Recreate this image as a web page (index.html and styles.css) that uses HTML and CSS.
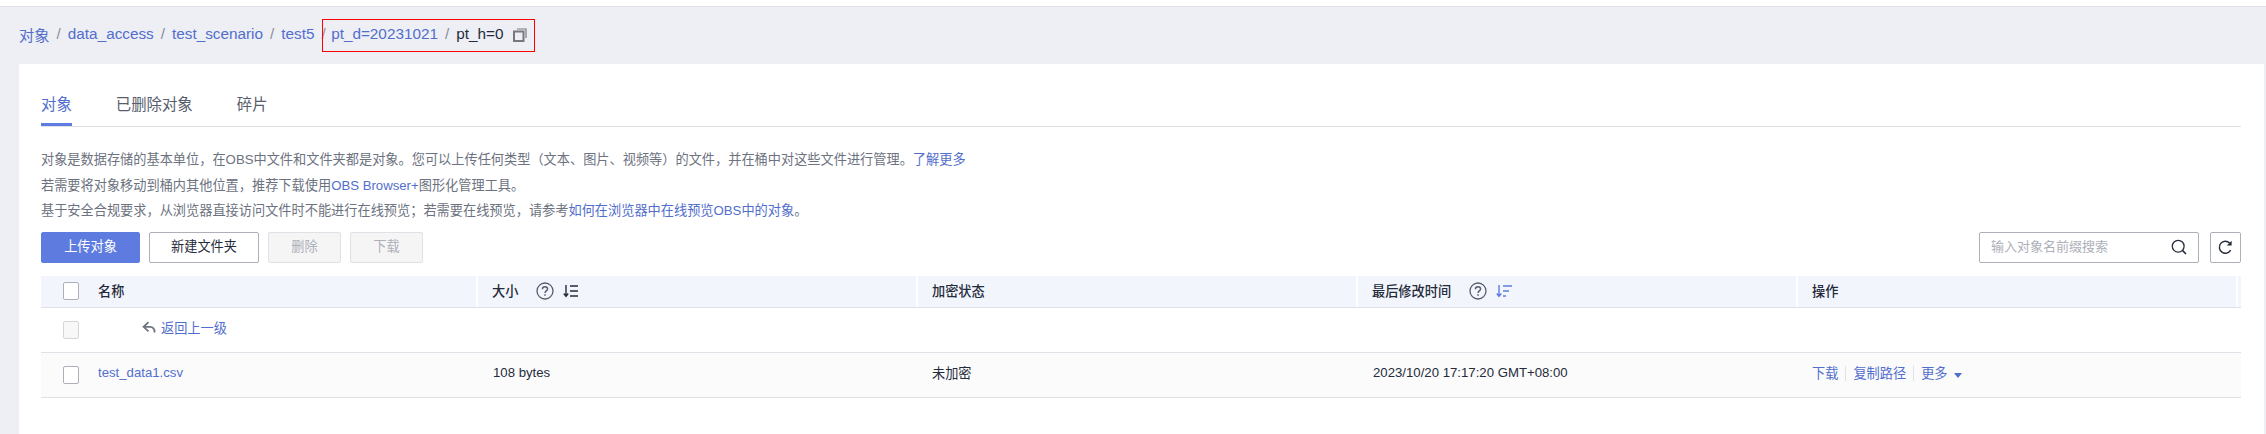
FILE: index.html
```html
<!DOCTYPE html>
<html lang="zh-CN">
<head>
  <meta charset="UTF-8" />
  <title>对象</title>
  <link rel="stylesheet" href="styles.css">
</head>
<body>
  <div class="topline"></div>

  <!-- Breadcrumb -->
  <nav class="crumbs">
    <a>对象</a><span class="sep">/</span>
    <a>data_access</a><span class="sep">/</span>
    <a>test_scenario</a><span class="sep">/</span>
    <a>test5</a><span class="sep">/</span>
    <div class="marked">
      <a>pt_d=20231021</a><span class="sep">/</span>
      <span class="current">pt_h=0</span>
      <svg class="copy" width="14" height="14" viewBox="0 0 14 14" fill="none">
        <rect x="1" y="3.5" width="9.5" height="9.5" stroke="#75787f" stroke-width="2"/>
        <path d="M4 1H13V10" stroke="#75787f" stroke-width="1.2"/>
      </svg>
    </div>
  </nav>

  <div class="card">
    <!-- Tabs -->
    <div class="tabs">
      <div class="tab active">对象</div>
      <div class="tab">已删除对象</div>
      <div class="tab">碎片</div>
    </div>

    <div class="desc">
      <p>对象是数据存储的基本单位，在OBS中文件和文件夹都是对象。您可以上传任何类型（文本、图片、视频等）的文件，并在桶中对这些文件进行管理。<a>了解更多</a></p>
      <p>若需要将对象移动到桶内其他位置，推荐下载使用<a>OBS Browser+</a>图形化管理工具。</p>
      <p>基于安全合规要求，从浏览器直接访问文件时不能进行在线预览；若需要在线预览，请参考<a>如何在浏览器中在线预览OBS中的对象</a>。</p>
    </div>

    <!-- Toolbar -->
    <div class="toolbar">
      <button class="btn primary">上传对象</button>
      <button class="btn outline">新建文件夹</button>
      <button class="btn disabled">删除</button>
      <button class="btn disabled">下载</button>
      <div class="spacer"></div>
      <div class="search">
        <input type="text" placeholder="输入对象名前缀搜索">
        <svg width="16" height="16" viewBox="0 0 16 16" fill="none" stroke="#252b3a" stroke-width="1.3">
          <circle cx="7.2" cy="7.2" r="5.9"/>
          <path d="M11.4 11.4L15 15" stroke-width="1.6"/>
        </svg>
      </div>
      <button class="btn refresh">
        <svg width="15" height="15" viewBox="0 0 15 15" fill="none">
          <path d="M12.6 10.2A6 6 0 1 1 11.6 3" stroke="#252b3a" stroke-width="1.4"/>
          <path d="M13.6 0.8V5.6H8.8Z" fill="#252b3a"/>
        </svg>
      </button>
    </div>

    <!-- Object table -->
    <div class="table">
      <div class="row head">
        <div class="cell name"><span class="check"></span><span class="txt">名称</span></div>
        <div class="cell"><span class="txt">大小</span>
          <svg class="help" width="18" height="18" viewBox="0 0 18 18" fill="none" stroke="#575d6c">
            <circle cx="9" cy="9" r="8" stroke-width="1.3"/>
            <path d="M6.4 7.2C6.4 5.6 7.6 4.7 9 4.7S11.6 5.6 11.6 7C11.6 8.8 9 9 9 11" stroke-width="1.4"/>
            <path d="M9 12.2V13.8" stroke-width="1.5"/>
          </svg>
          <svg class="sort" width="16" height="14" viewBox="0 0 16 14" fill="none" stroke="#252b3a" stroke-width="1.4">
            <path d="M3 1V12M0.8 9.5L3 12.4L5.2 9.5"/>
            <path d="M7 2H15M7 7H15M7 12H15"/>
          </svg>
        </div>
        <div class="cell"><span class="txt">加密状态</span></div>
        <div class="cell"><span class="txt">最后修改时间</span>
          <svg class="help" width="18" height="18" viewBox="0 0 18 18" fill="none" stroke="#575d6c">
            <circle cx="9" cy="9" r="8" stroke-width="1.3"/>
            <path d="M6.4 7.2C6.4 5.6 7.6 4.7 9 4.7S11.6 5.6 11.6 7C11.6 8.8 9 9 9 11" stroke-width="1.4"/>
            <path d="M9 12.2V13.8" stroke-width="1.5"/>
          </svg>
          <svg class="sort" width="16" height="14" viewBox="0 0 16 14" fill="none" stroke="#5e7ce0" stroke-width="1.4">
            <path d="M3 1V12M0.8 9.5L3 12.4L5.2 9.5"/>
            <path d="M7 2H16M7 7H13M7 12H10"/>
          </svg>
        </div>
        <div class="cell"><span class="txt">操作</span></div>
        <div class="cell"></div>
      </div>

      <div class="row">
        <div class="cell name"><span class="check off"></span>
          <svg class="back" width="14" height="13" viewBox="0 0 14 13" fill="none" stroke="#6f7480" stroke-width="1.8">
            <path d="M6.5 1.2L1.6 5.8L6.5 10.4"/>
            <path d="M1.6 5.8H8C11 5.8 12.6 8 12.6 11.5"/>
          </svg>
          <a>返回上一级</a>
        </div>
      </div>

      <div class="row object">
        <div class="cell name"><span class="check"></span><a>test_data1.csv</a></div>
        <div class="cell shift"><span class="txt">108 bytes</span></div>
        <div class="cell"><span class="txt">未加密</span></div>
        <div class="cell shift"><span class="txt">2023/10/20 17:17:20 GMT+08:00</span></div>
        <div class="cell actions">
          <a>下载</a><i></i><a>复制路径</a><i></i><a>更多</a><span class="caret"></span>
        </div>
        <div class="cell"></div>
      </div>
    </div>
  </div>
</body>
</html>
```

FILE: styles.css
```css
html, body {
  height: 100%;
}

body {
  margin: 0;
  height: 434px;
  overflow: hidden;
  background-color: #eeeff5;
  font-family: "Liberation Sans", "Noto Sans CJK SC", sans-serif;
  font-size: 13.2px;
  color: #252b3a;
}

a {
  color: #526ecc;
  text-decoration: none;
}

.topline {
  height: 6px;
  background: #fff;
  border-bottom: 1px solid #dfe1e6;
}

/* Breadcrumb */
.crumbs {
  display: flex;
  align-items: center;
  height: 57px;
  padding-left: 19px;
  font-size: 15.3px;
}

.crumbs a,
.crumbs .sep,
.crumbs .current {
  padding-bottom: 3px;
}

.sep {
  margin: 0 7px;
  color: #8a8e99;
}

.marked {
  display: flex;
  align-items: center;
  height: 33px;
  box-sizing: border-box;
  margin-left: -11px;
  padding: 0 6.5px 0 8.5px;
  border: 1.5px solid #f00;
}

.current {
  color: #252b3a;
}

.copy {
  margin-left: 10px;
  margin-bottom: 2px;
}

/* Card */
.card {
  margin: 0 2px 0 19px;
  height: 370px;
  box-sizing: border-box;
  padding: 0 23px 0 22px;
  background: #fff;
}

.tabs {
  display: flex;
  gap: 44px;
  height: 62px;
  border-bottom: 1px solid #dfe1e6;
}

.tab {
  padding-top: 30px;
  font-size: 15.4px;
  line-height: 22px;
  color: #575d6c;
}

.tab.active {
  color: #526ecc;
  border-bottom: 3px solid #5e7ce0;
  height: 29px;
}

.desc {
  margin-top: 20px;
  color: #6c7280;
  line-height: 25.5px;
}

.desc p {
  margin: 0;
}

/* Toolbar */
.toolbar {
  display: flex;
  gap: 9px;
  height: 31px;
  margin-top: 8px;
  margin-bottom: 13px;
}

.spacer {
  flex: 1;
}

.btn {
  height: 31px;
  padding: 0 0 3px;
  box-sizing: border-box;
  border: 1px solid #adb0b8;
  border-radius: 2px;
  background: #fff;
  color: #252b3a;
  font: inherit;
}

.btn.primary {
  width: 99px;
  background: #5e7ce0;
  border-color: #5e7ce0;
  color: #fff;
}

.btn.outline {
  width: 110px;
}

.btn.disabled {
  width: 73px;
  background: #f5f5f6;
  border-color: #dfe1e6;
  color: #adb0b8;
}

.btn.refresh {
  width: 31px;
  margin-left: 2px;
  padding: 0;
  display: flex;
  align-items: center;
  justify-content: center;
}

.search {
  display: flex;
  align-items: center;
  width: 220px;
  height: 31px;
  box-sizing: border-box;
  padding: 0 11px;
  border: 1px solid #adb0b8;
  border-radius: 2px;
}

.search input {
  flex: 1;
  min-width: 0;
  border: none;
  outline: none;
  padding: 0 0 2px;
  font: inherit;
  font-size: 13px;
  color: #252b3a;
}

.search input::placeholder {
  color: #adb0b8;
}

/* Table */
.row {
  display: grid;
  grid-template-columns: 435px 440px 440px 440px 440px 5px;
  height: 44px;
  border-bottom: 1px solid #dfe1e6;
}

.row.head {
  height: 31px;
  background: #f2f5fc;
  font-weight: 500;
}

.row.object {
  background: #fbfbfc;
}

.cell {
  display: flex;
  align-items: center;
  padding-left: 16px;
}

.cell.shift {
  padding-left: 17px;
}

.cell a,
.cell .txt {
  padding-bottom: 5px;
}

.head .cell .txt {
  padding-bottom: 1px;
}

.head .cell {
  box-sizing: border-box;
  border-left: 2px solid #fff;
  padding-left: 14px;
}

.head .cell.name,
.cell.name {
  border-left: none;
  padding-left: 22px;
}

.check {
  width: 16px;
  height: 18px;
  box-sizing: border-box;
  margin-right: 19px;
  background: #fff;
  border: 1px solid #adb0b8;
  border-radius: 2px;
}

.check.off {
  background: #f8f8f8;
  border-color: #d5d6da;
}

.back {
  margin-left: 44px;
  margin-right: 5px;
  margin-bottom: 4px;
}

.help {
  margin-left: 18px;
}

.sort {
  margin-left: 9px;
}

.actions i {
  width: 1px;
  height: 15px;
  margin: 0 7px 2px;
  background: #dfe1e6;
}

.caret {
  width: 0;
  height: 0;
  margin-left: 6px;
  margin-top: 2px;
  border-left: 4px solid transparent;
  border-right: 4px solid transparent;
  border-top: 5px solid #526ecc;
}
```
